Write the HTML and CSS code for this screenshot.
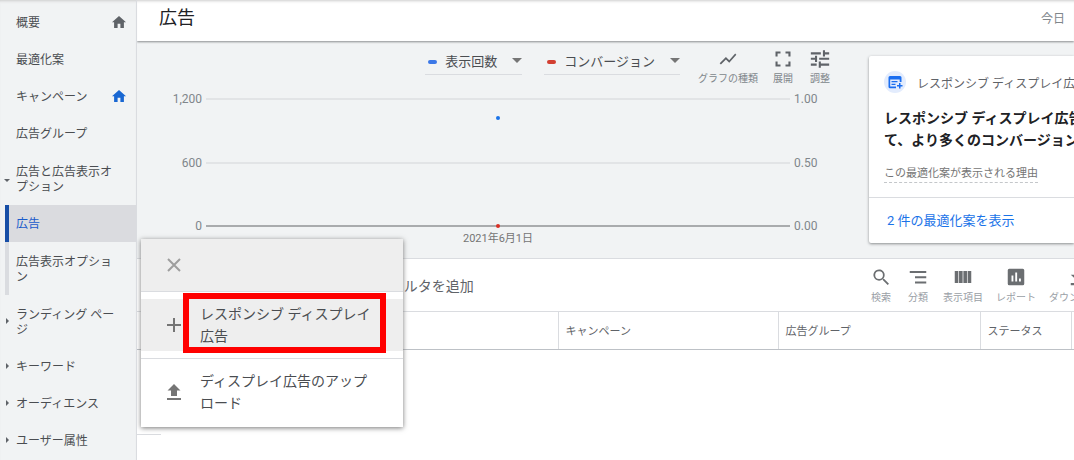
FILE: index.html
```
<!DOCTYPE html>
<html lang="ja">
<head>
<meta charset="utf-8">
<title>広告</title>
<link rel="stylesheet" href="styles.css">
</head>
<body>
<div class="app">
  <nav class="sidebar">
    <a class="nav-item" href="#">概要
      <svg class="home" viewBox="2 3 20 17"><path d="M10 20v-6h4v6h5v-8h3L12 3 2 12h3v8z"/></svg></a>
    <a class="nav-item" href="#">最適化案</a>
    <a class="nav-item" href="#">キャンペーン
      <svg class="home home-active" viewBox="2 3 20 17"><path d="M10 20v-6h4v6h5v-8h3L12 3 2 12h3v8z"/></svg></a>
    <a class="nav-item" href="#">広告グループ</a>
    <a class="nav-item open tall" href="#">広告と広告表示オプション</a>
    <a class="nav-item sub selected" href="#" aria-current="page">広告</a>
    <a class="nav-item sub tall" href="#">広告表示オプション</a>
    <a class="nav-item closed tall" href="#">ランディング ページ</a>
    <a class="nav-item closed" href="#">キーワード</a>
    <a class="nav-item closed" href="#">オーディエンス</a>
    <a class="nav-item closed" href="#">ユーザー属性</a>
  </nav>

  <main class="main">
    <header class="topbar">
      <h1>広告</h1>
      <span class="today">今日</span>
    </header>

    <section class="overview">
      <div class="chart-pane">
        <div class="chart-tools">
          <button class="metric metric-blue" type="button"><span>表示回数</span></button>
          <button class="metric metric-red" type="button"><span>コンバージョン</span></button>
          <div class="tool-group">
            <button class="tool" type="button">
              <svg viewBox="0 0 24 24"><path d="M3.5 18.5l6-6 4 4L22 6.900l-1.400-1.400-7.100 8-4-4L2 17z"/></svg>グラフの種類</button>
            <button class="tool" type="button">
              <svg viewBox="0 0 24 24"><path d="M3 3h6v2.500H5.500V9H3zM15 3h6v6h-2.500V5.500H15zM3 15h2.500v3.500H9V21H3zM18.500 15H21v6h-6v-2.500h3.500z"/></svg>展開</button>
            <button class="tool" type="button">
              <svg viewBox="0 0 24 24"><path d="M1 17.500v2.500h7v-2.500zM1 4v2.500h12V4zm12 18.500V20h10v-2.500H13V15h-2.500v7.500zM6 8v2.500H1V13h5v2.500h2.500V8zm17 5v-2.500H11V13zM15.500 9H18V6.500h5V4h-5V1.500h-2.500z"/></svg>調整</button>
          </div>
        </div>
        <div class="chart">
          <div class="grid-row"><span class="left">1,200</span><i></i><span>1.00</span></div>
          <div class="grid-row"><span class="left">600</span><i></i><span>0.50</span></div>
          <div class="grid-row base"><span class="left">0</span><i></i><span>0.00</span></div>
          <b class="point point-blue"></b>
          <b class="point point-red"></b>
        </div>
        <div class="chart-date">2021年6月1日</div>
      </div>

      <aside class="card">
        <div class="card-body">
          <div class="card-head">
            <svg class="badge" viewBox="0 0 22 22"><circle cx="11" cy="11" r="11" fill="#e3ecfd"/><path fill="#1a6ef0" d="M6 5h10a1.500 1.500 0 0 1 1.500 1.500V11h-1.800V8.500H6.200v7H12v1.800H6A1.500 1.500 0 0 1 4.500 16V6.500A1.500 1.500 0 0 1 6 5zM7.500 10h6v1.300h-6zM7.500 12.700h4V14h-4zM15 12h1.500v2H18.500v1.500h-2v2H15v-2h-2V14h2z"/></svg>
            <span>レスポンシブ ディスプレイ広</span>
          </div>
          <h2>レスポンシブ ディスプレイ広告<br>て、より多くのコンバージョン</h2>
          <a class="reason" href="#">この最適化案が表示される理由</a>
        </div>
        <div class="card-foot"><a href="#">2 件の最適化案を表示</a></div>
      </aside>
    </section>

    <section class="filterbar">
      <button class="add-filter" type="button">フィルタを追加</button>
      <div class="table-tools">
        <button class="tool" type="button">
          <svg viewBox="0 0 24 24"><path d="M15.500 14h-.8l-.3-.3a6.500 6.500 0 1 0-.7.7l.3.300v.8l5.500 5.500 1.500-1.500zm-6 0a4.500 4.500 0 1 1 0-9 4.500 4.500 0 0 1 0 9z" transform="translate(-1.500 -1.500) scale(1.150)"/></svg>検索</button>
        <button class="tool" type="button">
          <svg viewBox="0 0 24 24"><path d="M1 4h22v2.500H1zM8 11h15v2.500H8zM8 18h15v2.500H8z"/></svg>分類</button>
        <button class="tool" type="button">
          <svg viewBox="0 0 24 24"><path d="M1 4h4.800v16H1zM6.700 4h4.800v16H6.700zM12.500 4h4.800v16h-4.800zM18.200 4H23v16h-4.800z"/></svg>表示項目</button>
        <button class="tool" type="button">
          <svg viewBox="0 0 24 24"><path fill-rule="evenodd" d="M3 1h18a2 2 0 0 1 2 2v18a2 2 0 0 1-2 2H3a2 2 0 0 1-2-2V3a2 2 0 0 1 2-2zM6 10v8h2.500v-8zM11 6v12h2.500V6zM16 14v4h2.500v-4z"/></svg>レポート</button>
        <button class="tool" type="button">
          <svg viewBox="0 0 24 24"><path d="M23 9h-6V1H7v8H1l11 10zM1 20v3h22v-3z"/></svg>ダウンロード</button>
      </div>
    </section>

    <table class="grid">
      <thead>
        <tr><th class="col-ad"></th><th class="col-campaign">キャンペーン</th><th class="col-group">広告グループ</th><th class="col-status">ステータス</th><th class="col-rest"></th></tr>
      </thead>
    </table>
    <div class="grid-end"></div>

    <div class="menu">
      <div class="menu-head">
        <button type="button" aria-label="閉じる"><svg viewBox="0 0 14 14"><path d="M1 1l12 12M13 1L1 13"/></svg></button>
      </div>
      <div class="menu-section">
        <button class="menu-item hover" type="button">
          <svg viewBox="0 0 14 14"><path d="M7 0v14M0 7h14"/></svg><span>レスポンシブ ディスプレイ広告</span></button>
        <div class="highlight"></div>
      </div>
      <div class="menu-section">
        <button class="menu-item" type="button">
          <svg class="solid" viewBox="0 0 14 16"><path d="M4 12V6.500H0.500L7 0l6.500 6.500H10V12zM0 14h14v2H0z"/></svg><span>ディスプレイ広告のアップロード</span></button>
      </div>
    </div>
  </main>
</div>
</body>
</html>
```

FILE: styles.css
```
* { box-sizing: border-box; }

body {
  margin: 0;
  font-family: Roboto, "Noto Sans CJK JP", sans-serif;
  font-size: 12px;
  color: #4a4d51;
  background: #fff;
}

button {
  margin: 0;
  padding: 0;
  border: 0;
  background: none;
  font: inherit;
  color: inherit;
}

a { text-decoration: none; color: inherit; }

.app { display: flex; min-height: 100vh; overflow: hidden; }

/* Sidebar */
.sidebar {
  flex: 0 0 137px;
  padding-top: 4px;
  background: #f1f3f4;
  border-right: 1px solid #dadce0;
  box-shadow: inset 0 3px 3px -2px #ccc;
}

.nav-item {
  position: relative;
  display: flex;
  align-items: center;
  justify-content: space-between;
  min-height: 37px;
  padding: 2px 10px 0 16px;
  line-height: 15px;
}
.nav-item.tall { min-height: 53px; padding-right: 20px; }

.home { width: 14px; height: 12px; margin-bottom: 4px; fill: #5f6368; }
.home-active { fill: #1967d2; }

.open::before, .closed::before {
  content: "";
  position: absolute;
  left: 4px;
  top: 50%;
  border: 3px solid transparent;
}
.open::before { border-top-color: #5f6368; }
.closed::before { left: 6px; margin-top: -4px; border-left-color: #5f6368; }

.sub::before {
  content: "";
  position: absolute;
  left: 5px;
  top: 0;
  bottom: 0;
  width: 4px;
  background: #dadce0;
}
.selected { color: #1a5ccb; background: linear-gradient(to right, transparent 5px, #dadbdf 5px); }
.selected::before { background: #174ea6; }

/* Main column */
.main { position: relative; flex: 1; min-width: 0; overflow: hidden; }

.topbar {
  position: relative;
  display: flex;
  align-items: center;
  justify-content: space-between;
  height: 41px;
  padding: 0 9px 6px 22px;
  background: #fff;
  box-shadow: 0 1px 2px #8a8d8f, inset 0 3px 3px -2px #ccc;
}
.topbar h1 { margin: 0; font-size: 18px; font-weight: 400; line-height: 24px; color: #202124; }
.today { color: #80868b; }

.overview {
  display: flex;
  height: 218px;
  background: #f1f3f4;
  border-bottom: 1px solid #dadce0;
}

.chart-pane { flex: 1; min-width: 0; }

.chart-tools {
  display: flex;
  justify-content: flex-end;
  align-items: flex-start;
  gap: 22px;
  padding: 8px 37px 0 0;
}

.metric {
  display: flex;
  align-items: center;
  gap: 8px;
  height: 26px;
  padding-left: 3px;
  border-bottom: 1px solid #dadce0;
  font-size: 13px;
}
.metric::before { content: ""; width: 9px; height: 4px; border-radius: 2px; background: #3b78e7; }
.metric-red::before { background: #d23f31; }
.metric::after {
  content: "";
  margin: 3px 0 0 7px;
  border: 5px solid transparent;
  border-top-color: #757575;
}
.metric span { line-height: 20px; }

.tool-group { display: flex; gap: 13px; margin-left: -4px; }

.tool {
  display: flex;
  flex-direction: column;
  align-items: center;
  min-width: 24px;
  gap: 3px;
  font-size: 10px;
  line-height: 14px;
  color: #80868b;
  white-space: nowrap;
}
.tool svg { width: 20px; height: 20px; fill: #5f6368; }

.chart {
  position: relative;
  display: flex;
  flex-direction: column;
  justify-content: space-between;
  height: 139px;
  margin-top: 7px;
}
.grid-row {
  display: flex;
  align-items: center;
  gap: 4px;
  height: 12px;
  line-height: 12px;
  color: #80868b;
}
.grid-row span { width: 75px; }
.grid-row .left { width: 65px; text-align: right; }
.grid-row i { flex: 1; height: 2px; background: #e2e4e6; }
.grid-row.base i { background: #a9abad; }

.point {
  position: absolute;
  left: calc(50% - 7px);
  width: 4px;
  height: 4px;
  border-radius: 50%;
}
.point-blue { top: 23px; background: #1a73e8; }
.point-red { bottom: 4px; background: #d93025; }

.chart-date {
  padding-right: 10px;
  text-align: center;
  line-height: 14px;
  font-size: 11px;
  color: #757575;
}

/* Recommendation card */
.card {
  flex: 0 0 205px;
  margin: 15px 0;
  overflow: hidden;
  clip-path: inset(-4px 0 -4px -4px);
  border-radius: 2px 0 0 2px;
  background: #fff;
  box-shadow: 0 1px 3px #8a8d8f;
  white-space: nowrap;
}
.card-body { height: 142px; padding: 15px 0 0 15px; border-bottom: 1px solid #dadce0; }
.card-head { display: flex; align-items: center; gap: 11px; color: #5f6368; }
.badge { flex: none; width: 22px; height: 22px; }
.card h2 { margin: 14px 0 15px; font-size: 14px; font-weight: 700; line-height: 22px; color: #202124; }
.reason {
  display: inline-block;
  border-bottom: 1px dashed #c4c7ca;
  font-size: 11px;
  line-height: 16px;
  color: #757575;
}
.card-foot { padding: 13px 18px; font-size: 13px; line-height: 20px; color: #1a73e8; }

/* Filter bar */
.filterbar {
  display: flex;
  align-items: center;
  height: 53px;
  border-bottom: 1px solid #dadce0;
}
.add-filter { margin-left: 239px; font-size: 14px; color: #5f6368; }
.table-tools { display: flex; flex: 0 0 205px; min-width: 0; gap: 13px; margin-left: auto; padding-top: 3px; }
.filterbar .tool { flex: none; gap: 5px; color: #9aa0a6; }
.filterbar .tool svg { width: 18px; height: 18px; fill: #6b6e71; }

/* Ads table */
.grid { width: 100%; table-layout: fixed; border-collapse: collapse; }
.grid th {
  height: 37px;
  padding: 0 7px;
  border-left: 1px solid #dadce0;
  border-bottom: 1px solid #bdc1c6;
  text-align: left;
  font-size: 11px;
  font-weight: 400;
  color: #5f6368;
}
.grid .col-ad { border-left: 0; }
.col-campaign { width: 220px; }
.col-group { width: 202px; }
.col-status { width: 91px; }
.col-rest { width: 3px; }
.grid .col-rest { padding: 0; }

.grid-end { width: 24px; height: 85px; border-bottom: 1px solid #dadce0; }

/* Create menu */
.menu {
  position: absolute;
  left: 4px;
  top: 239px;
  width: 262px;
  background: #fff;
  box-shadow: 0 1px 5px #777;
}
.menu-head { height: 53px; padding: 19px 26px; background: #eee; border-bottom: 1px solid #dadce0; }
.menu button { display: flex; }
.menu svg { flex: none; width: 14px; height: 14px; fill: none; stroke: #757575; stroke-width: 2; }
.menu .menu-head svg { stroke: #9e9e9e; }
.menu .solid { height: 16px; fill: #757575; stroke: none; }
.menu-section { position: relative; padding: 7px 0; }
.menu-section + .menu-section { padding-bottom: 9px; border-top: 1px solid #dadce0; }
.menu .menu-item {
  align-items: center;
  gap: 19px;
  width: 100%;
  padding: 4px 26px;
  font-size: 14px;
  line-height: 22px;
  text-align: left;
}
.menu .hover { background: #eee; }
.highlight {
  position: absolute;
  top: 1px;
  left: 42px;
  right: 17px;
  height: 60px;
  border: 6px solid #f00;
  pointer-events: none;
}
```
